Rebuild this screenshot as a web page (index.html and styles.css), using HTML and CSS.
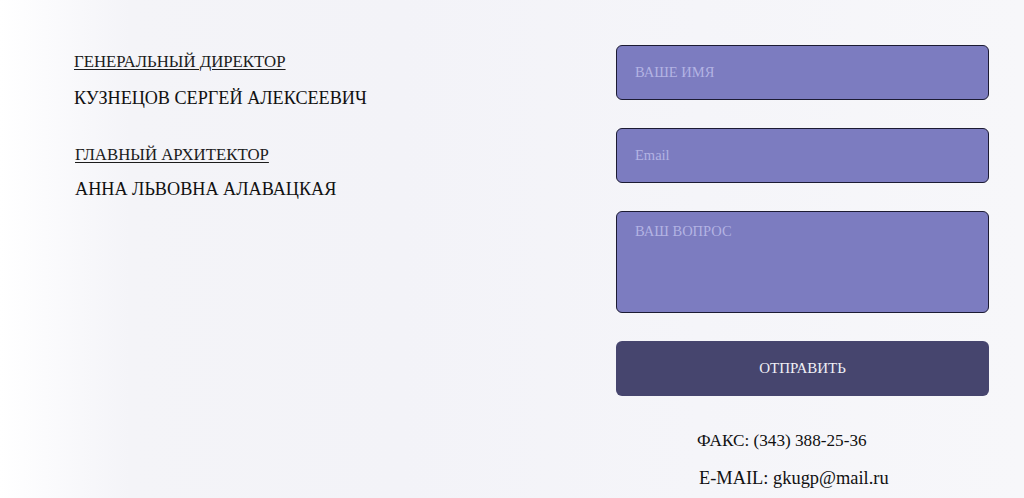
FILE: index.html
```html
<!DOCTYPE html>
<html lang="ru">
<head>
<meta charset="utf-8">
<title>Контакты</title>
<link rel="stylesheet" href="styles.css">
</head>
<body>
<div class="page">
  <section class="people">
    <div class="person">
      <div class="role">ГЕНЕРАЛЬНЫЙ ДИРЕКТОР</div>
      <div class="name">КУЗНЕЦОВ СЕРГЕЙ АЛЕКСЕЕВИЧ</div>
    </div>
    <div class="person second">
      <div class="role">ГЛАВНЫЙ АРХИТЕКТОР</div>
      <div class="name">АННА ЛЬВОВНА АЛАВАЦКАЯ</div>
    </div>
  </section>
  <section class="contact">
    <form class="form">
      <input class="field" type="text" placeholder="ВАШЕ ИМЯ">
      <input class="field" type="text" placeholder="Email">
      <textarea class="field area" placeholder="ВАШ ВОПРОС"></textarea>
      <button class="send" type="button">ОТПРАВИТЬ</button>
    </form>
    <div class="info">
      <div class="line fax">ФАКС: (343) 388-25-36</div>
      <div class="line mail">E-MAIL: gkugp@mail.ru</div>
    </div>
  </section>
</div>
</body>
</html>
```
FILE: styles.css
```css
html, body {
  margin: 0;
  padding: 0;
  height: 100%;
}
body {
  font-family: "Liberation Serif", "DejaVu Serif", serif;
  color: #1a1a1a;
  background: linear-gradient(90deg, #ffffff 0px, #fbfbfd 45px, #f4f4f8 130px, #f3f3f8 400px, #f5f5f9 700px, #f7f7fa 1024px);
  overflow: hidden;
}
.page {
  display: flex;
  justify-content: space-between;
  padding: 45px 35px 0 74px;
}
.people {
  display: flex;
  flex-direction: column;
  padding-top: 5px;
}
.person.second {
  margin-top: 33px;
}
.role {
  font-size: 16.8px;
  line-height: 24px;
  text-decoration: underline;
  text-underline-offset: 2px;
  text-decoration-thickness: 1px;
  color: #1c1c1c;
}
.person.second .role {
  padding-left: 1px;
}
.name {
  margin-top: 12px;
  font-size: 18.2px;
  line-height: 24px;
  color: #111;
}
.person.second .name {
  margin-top: 10px;
  padding-left: 1px;
}
.contact {
  width: 373px;
  display: flex;
  flex-direction: column;
}
.form {
  display: flex;
  flex-direction: column;
  gap: 28px;
}
.field {
  box-sizing: border-box;
  width: 100%;
  height: 55px;
  background: #7c7cc0;
  border: 1px solid #1c1b33;
  border-radius: 6px;
  padding: 0 18px;
  font-family: "Liberation Serif", "DejaVu Serif", serif;
  font-size: 14.5px;
  color: #e8e8f8;
  outline: none;
  margin: 0;
}
.field::placeholder {
  color: #b3b3e3;
  opacity: 1;
}
.area {
  height: 102px;
  padding-top: 11px;
  resize: none;
  display: block;
}
.send {
  height: 55px;
  background: #46456e;
  border: none;
  border-radius: 6px;
  color: #f0f0f6;
  font-family: "Liberation Serif", "DejaVu Serif", serif;
  font-size: 15px;
  padding: 0;
  margin: 0;
}
.info {
  margin-top: 33px;
  padding-left: 81px;
  display: flex;
  flex-direction: column;
  gap: 13px;
}
.line {
  line-height: 24px;
  color: #111;
}
.line.fax {
  font-size: 17.2px;
}
.line.mail {
  font-size: 18.4px;
  padding-left: 2px;
}
```
